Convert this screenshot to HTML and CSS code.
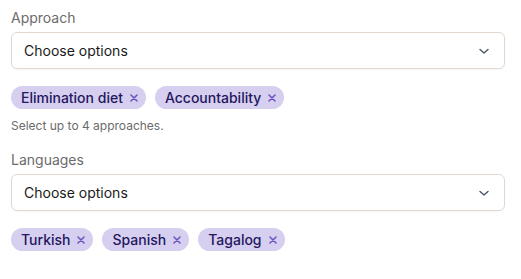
FILE: index.html
```html
<!DOCTYPE html>
<html>
<head>
  <link rel="stylesheet" href="styles.css">
</head>
<body>
  <div class="form">
    <div class="field">
      <label class="field-label">Approach</label>
      <div class="select">
        <span>Choose options</span>
        <svg class="chevron" width="12" height="12" viewBox="0 0 12 12"><path d="M2 4.5l4 3.5 4-3.5" fill="none" stroke="#4b5563" stroke-width="1.4" stroke-linecap="round" stroke-linejoin="round"/></svg>
      </div>
      <div class="chips">
        <span class="chip">Elimination diet<svg class="chip-x" width="8" height="8" viewBox="0 0 8 8"><path d="M1 1l6 6M7 1l-6 6" stroke="#6a52c0" stroke-width="1.5" stroke-linecap="round"/></svg></span>
        <span class="chip">Accountability<svg class="chip-x" width="8" height="8" viewBox="0 0 8 8"><path d="M1 1l6 6M7 1l-6 6" stroke="#6a52c0" stroke-width="1.5" stroke-linecap="round"/></svg></span>
      </div>
      <div class="hint">Select up to 4 approaches.</div>
    </div>

    <div class="field">
      <label class="field-label">Languages</label>
      <div class="select">
        <span>Choose options</span>
        <svg class="chevron" width="12" height="12" viewBox="0 0 12 12"><path d="M2 4.5l4 3.5 4-3.5" fill="none" stroke="#4b5563" stroke-width="1.4" stroke-linecap="round" stroke-linejoin="round"/></svg>
      </div>
      <div class="chips">
        <span class="chip">Turkish<svg class="chip-x" width="8" height="8" viewBox="0 0 8 8"><path d="M1 1l6 6M7 1l-6 6" stroke="#6a52c0" stroke-width="1.5" stroke-linecap="round"/></svg></span>
        <span class="chip">Spanish<svg class="chip-x" width="8" height="8" viewBox="0 0 8 8"><path d="M1 1l6 6M7 1l-6 6" stroke="#6a52c0" stroke-width="1.5" stroke-linecap="round"/></svg></span>
        <span class="chip">Tagalog<svg class="chip-x" width="8" height="8" viewBox="0 0 8 8"><path d="M1 1l6 6M7 1l-6 6" stroke="#6a52c0" stroke-width="1.5" stroke-linecap="round"/></svg></span>
      </div>
    </div>
  </div>
</body>
</html>
```

FILE: styles.css
```css
body {
  margin: 0;
  background: #fff;
  font-family: Inter, "Noto Sans", sans-serif;
  color: #1f1f1f;
}

.form {
  padding: 8px 16px 0 11px;
  display: flex;
  flex-direction: column;
  gap: 16px;
}

.field {
  display: flex;
  flex-direction: column;
}

.field-label {
  font-size: 14px;
  line-height: 20px;
  color: #6b6b6b;
  margin-bottom: 4px;
}

.select {
  height: 37px;
  box-sizing: border-box;
  border: 1px solid #e2d8cf;
  border-radius: 6px;
  padding: 0 12px;
  display: flex;
  align-items: center;
  justify-content: space-between;
  font-size: 14px;
  color: #1a1a1a;
  box-shadow: 0 1px 2px rgba(0,0,0,0.04);
}

.chevron {
  margin-right: 2px;
}

.chips {
  display: flex;
  flex-wrap: wrap;
  gap: 9px;
  margin-top: 17px;
}

.chip {
  display: inline-flex;
  align-items: center;
  gap: 7px;
  height: 23px;
  padding: 0 8px 0 10px;
  border-radius: 12px;
  background: #d6cff0;
  color: #24175e;
  font-size: 14px;
  font-weight: 500;
}

.hint {
  font-size: 12px;
  line-height: 16px;
  color: #6b6b6b;
  margin-top: 9px;
}
```
